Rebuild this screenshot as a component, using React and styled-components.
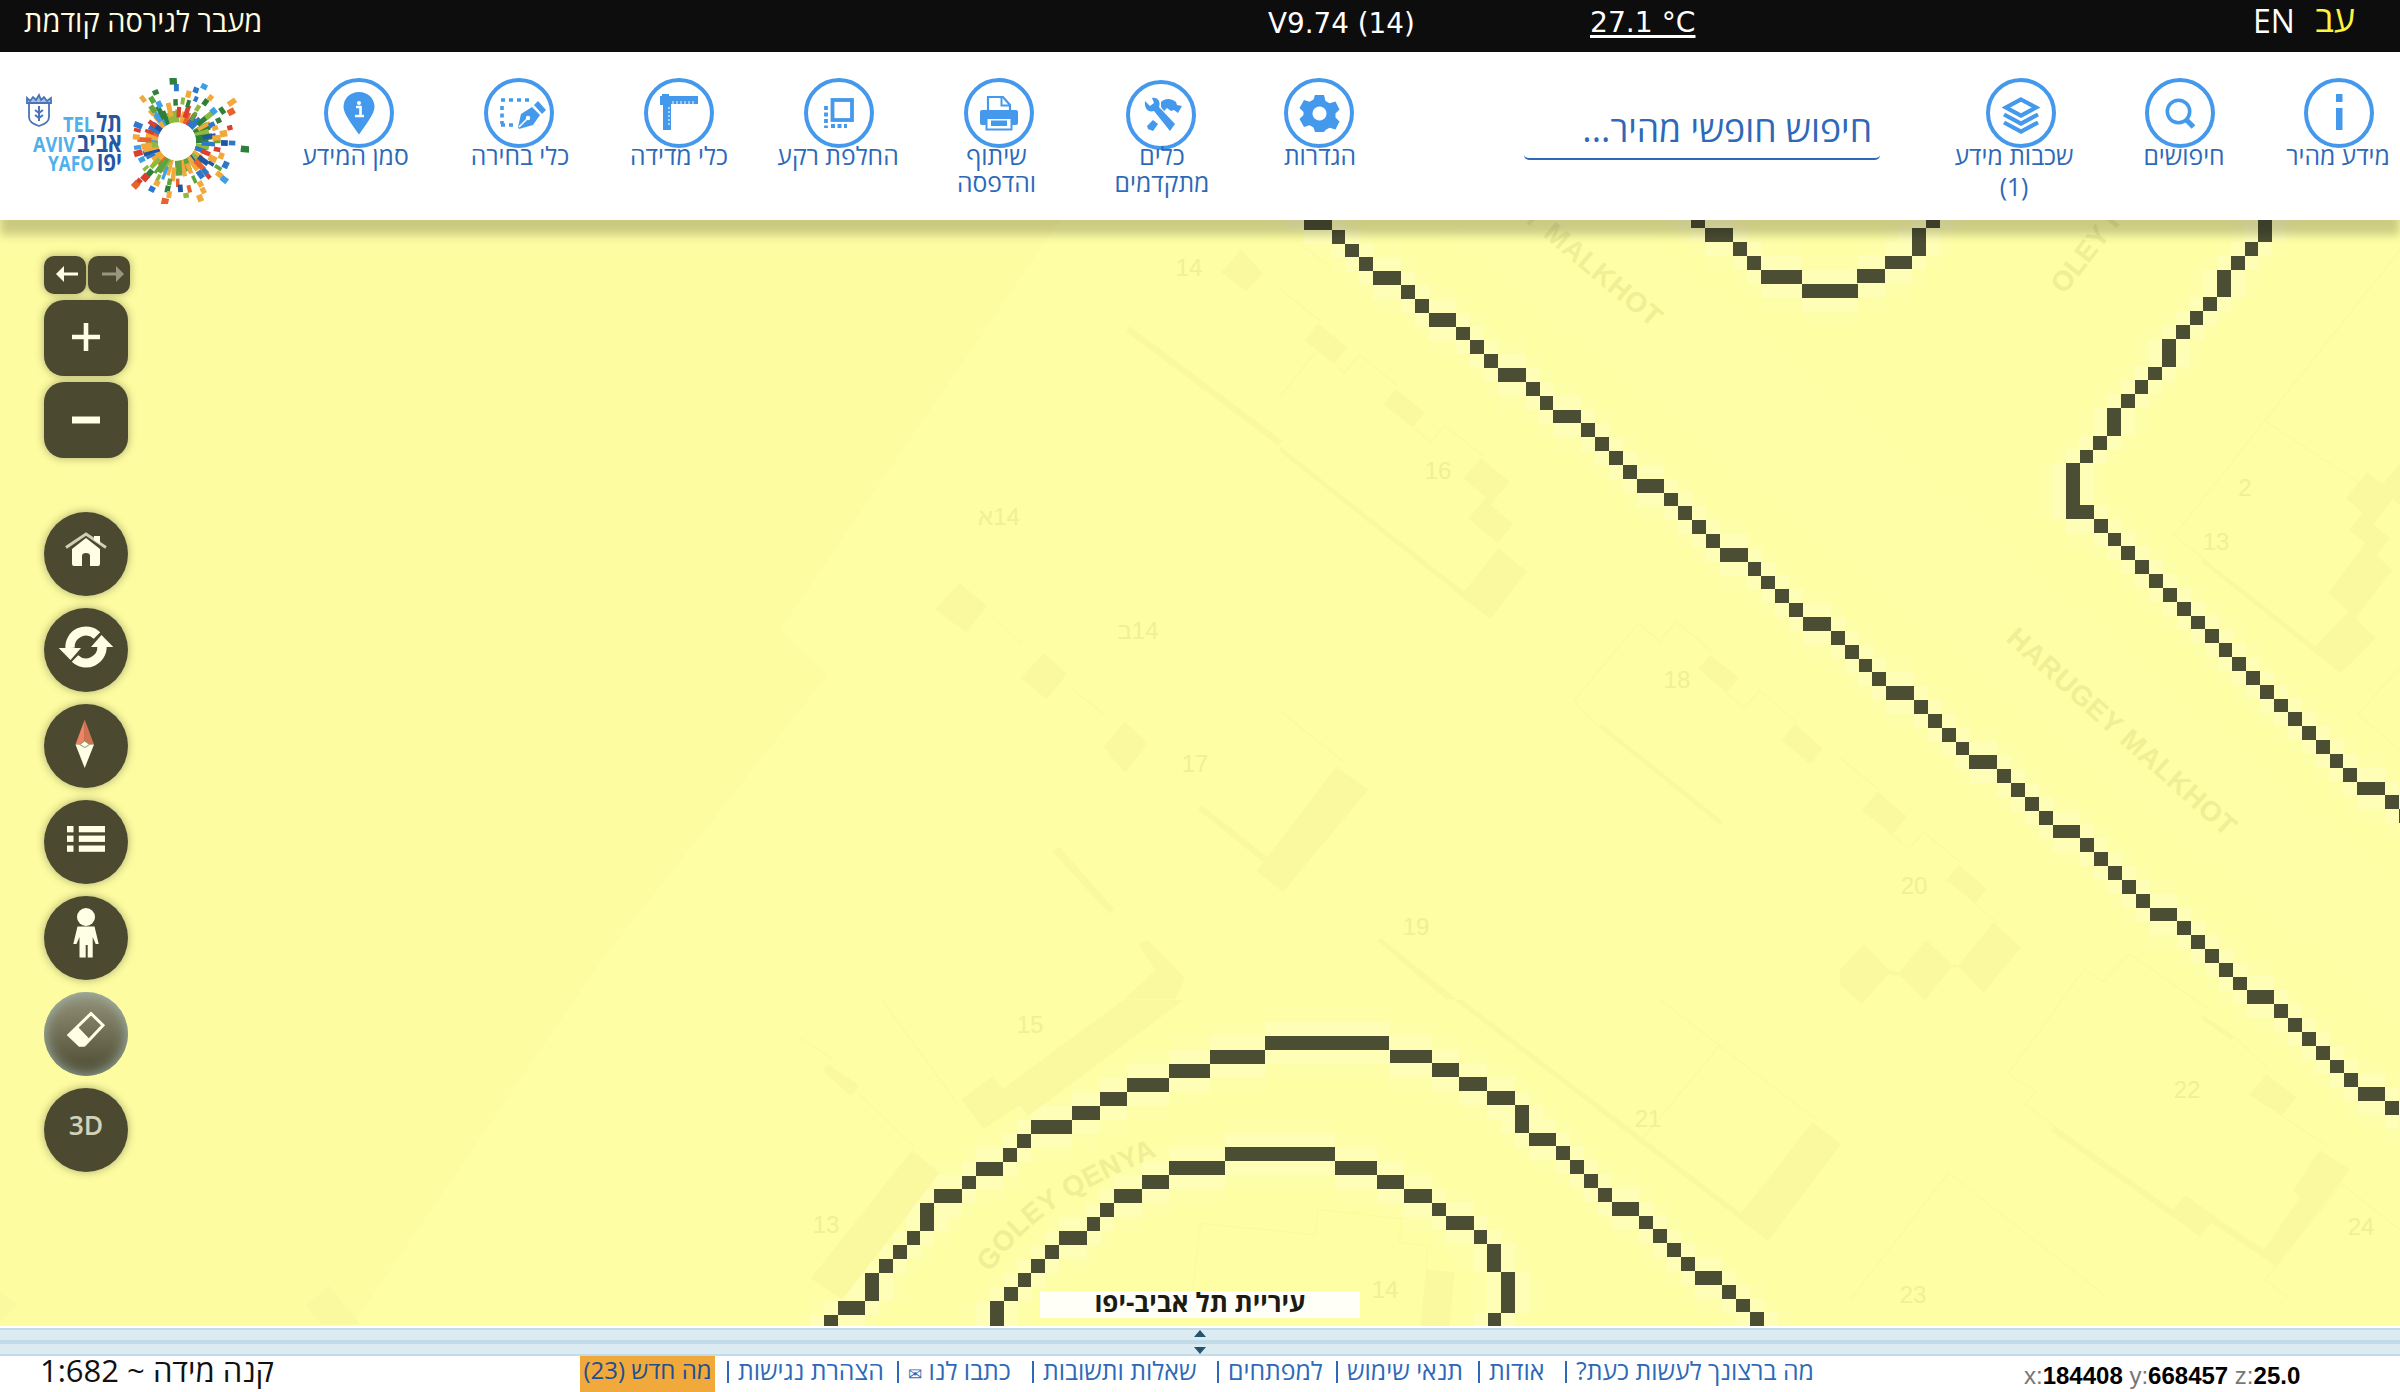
import React from 'react';
import styled, { createGlobalStyle } from 'styled-components';

const SANS = '"Open Sans", "Liberation Sans", sans-serif';
const WIDE = '"DejaVu Sans", "Liberation Sans", sans-serif';
const BLUE = '#2d69b8';
const SKY = '#4599ec';
const OLIVE = '#4b4a30';
const CREAM = '#ffffe6';

const Global = createGlobalStyle`
  html, body { margin: 0; padding: 0; background: #fff; overflow: hidden; }
  * { box-sizing: border-box; }
`;

const Page = styled.div`
  width: 2400px; height: 1392px; display: flex; flex-direction: column;
  font-family: ${SANS}; color: ${BLUE};
`;

/* ---------- top bar ---------- */
const TopBar = styled.div`
  height: 52px; flex: none; background: #0d0d0d; color: #fff;
  display: grid; grid-template-columns: 1268px 322px 663px 62px auto; align-items: start;
`;
const TopText = styled.div`
  white-space: nowrap; font-family: ${p => p.$font || SANS}; font-size: ${p => p.$size}px;
  line-height: ${p => p.$line}px; color: ${p => p.$color || '#fff'};
  padding-left: ${p => p.$pad || 0}px; letter-spacing: ${p => p.$track || 0}px;
  font-weight: ${p => p.$weight || 400};
`;
const Temperature = styled.span`text-decoration: underline; text-decoration-thickness: 3px; text-underline-offset: 3px;`;

/* ---------- header ---------- */
const Header = styled.header`
  height: 168px; flex: none; background: #fff; display: flex; align-items: flex-start;
  position: relative; z-index: 2;
  box-shadow: 0 15px 9px 0 rgba(0, 0, 0, 0.2);
`;
const LogoBox = styled.div`width: 279px; padding: 26px 0 0 24px;`;
const LogoSvg = styled.svg`display: block; width: 225px; height: 126px;`;
const NavGroup = styled.nav`display: flex;`;
const NavItem = styled.div`
  width: ${p => p.$w || 160}px; margin-left: ${p => p.$gap || 0}px; padding-top: 26px;
  display: flex; flex-direction: column; align-items: center;
`;
const NavSvg = styled.svg`width: 70px; height: 70px; display: block; margin-left: ${p => p.$x || 0}px; margin-top: ${p => p.$y || 0}px;`;
const NavLabel = styled.div`
  margin-top: ${p => -5 - (p.$up || 0)}px; margin-left: ${p => (p.$dx || 0) * 2}px;
  font-size: 24.7px; line-height: 26.5px; text-align: center; white-space: nowrap; direction: rtl;
`;
const LabelLine = styled.div`padding-top: ${p => p.$drop || 0}px;`;
const Search = styled.div`
  margin: 51px 60px 0 125px; width: 356px; height: 57px; padding: 1px 8px 0 0;
  border-bottom: 2px solid ${BLUE}; border-radius: 5px;
  direction: rtl; font-size: 35.6px; line-height: 48px; white-space: nowrap;
`;

/* ---------- map ---------- */
const MapArea = styled.main`height: 1106px; flex: none; position: relative; overflow: hidden; background: #fefea4;`;
const MapSvg = styled.svg`display: block; width: 2400px; height: 1106px;`;
const Tools = styled.div`position: absolute; left: 44px; top: 36px; display: flex; flex-direction: column; width: 86px;`;
const History = styled.div`display: flex; gap: 2px; margin-bottom: 6px;`;
const shade = 'box-shadow: 0 0 8px rgba(75, 74, 48, 0.45);';
const SmallButton = styled.button`
  width: 42px; height: 38px; border: 0; padding: 0; border-radius: 10px; background: ${OLIVE}; ${shade}
`;
const ZoomButton = styled.button`
  width: 84px; height: 76px; border: 0; padding: 0; border-radius: 20px; background: ${OLIVE}; margin-bottom: ${p => p.$after}px; ${shade}
`;
const RoundButton = styled.button`
  width: 84px; height: 84px; border: 0; padding: 0; border-radius: 50%; margin-bottom: 12px;
  background: ${p => (p.$active ? 'linear-gradient(#95937a, #4b4a30)' : OLIVE)};
  ${p => (p.$active ? 'box-shadow: inset 0 0 14px #a3bcb4;' : shade)}
`;
const ToolSvg = styled.svg`display: block;`;
const ToolText = styled.span`
  display: block; font: 600 26.5px/54px ${SANS}; color: #d3d2b8; padding-bottom: 10px;
`;
const Owner = styled.div`
  position: absolute; left: 1040px; top: 1071px; width: 320px; height: 27px;
  background: rgba(255, 255, 250, 0.97); color: #1c1c12; text-align: center; direction: rtl;
  font-size: 26px; line-height: 22px; font-weight: 700; white-space: nowrap;
`;

/* ---------- splitter and footer ---------- */
const Splitter = styled.div`
  height: 30px; flex: none; border-top: 2px solid #fff;
  display: flex; flex-direction: column; background: #c1dbe9; padding: 2px 0;
`;
const SplitRow = styled.div`
  height: 10px; margin-bottom: ${p => (p.$first ? 4 : 0)}px; background: #dcebf2;
  display: flex; justify-content: center; align-items: ${p => (p.$first ? 'flex-start' : 'flex-end')};
`;
const Footer = styled.footer`height: 36px; flex: none; display: flex; align-items: flex-start; background: #fff;`;
const ScaleBox = styled.div`width: 580px; padding-left: 40px; display: flex;`;
const Scale = styled.div`direction: rtl; color: #111; font-size: 31px; line-height: 28px; white-space: nowrap;`;
const News = styled.a`
  width: 135px; height: 36px; margin-right: 12px; background: #f2a93b; color: #1f4f8f; text-align: center;
  direction: rtl; font-size: 24px; line-height: 28px; white-space: nowrap;
`;
const Links = styled.div`display: flex; width: 1297px;`;
const Link = styled.a`
  width: ${p => p.$w}px; display: flex; gap: 9px; font-size: 24.8px; line-height: 28px; white-space: nowrap;
`;
const Bar = styled.i`width: 2px; height: 22px; margin-top: 5px; background: ${BLUE};`;
const LinkText = styled.span`direction: rtl;`;
const Mail = styled.span`font-size: 17px;`;
const Coords = styled.div`font: 24px/40px "Liberation Sans", sans-serif; color: #777; white-space: nowrap; b { color: #000; }`;

/* ---------- logo ---------- */
const PALETTE = ['#1f56a5', '#3f9fe6', '#e8622c', '#f0a93a', '#2f7f3a', '#8cba3f', '#d9402e', '#2c78cc', '#f0a93a', '#5fa53f'];
function burst() {
  const out = [];
  let seed = 11;
  const rnd = () => { seed = (seed * 16807) % 2147483647; return seed / 2147483647; };
  const rings = [[19, 13, 40, 5], [24, 11, 24, 4.500], [35, 7, 34, 4.800], [43, 6, 26, 5.500], [50, 6, 19, 6], [56, 6, 11, 6], [62, 7, 9, 5]];
  rings.forEach(([r, len, n, w], k) => {
    for (let i = 0; i < n; i++) {
      const a = (i / n) * 360 + rnd() * 7;
      const westGap = (k > 2 && a > 140 && a < 224) || (k === 6 && a > 50 && a < 310);
      const c = PALETTE[Math.floor(rnd() * PALETTE.length)];
      const l = len * (0.8 + rnd() * 0.5);
      const ww = w * (0.7 + rnd() * 0.6);
      if (!westGap && rnd() < 0.92) {
        out.push(<rect key={k + '-' + i} x={r + (k ? rnd() * 3 : 0)} y={-ww / 2} width={l} height={ww} fill={c} transform={`rotate(${a})`} />);
      }
    }
  });
  return out;
}
function Logo() {
  return (
    <LogoSvg viewBox="24 78 225 126">
      <g transform="translate(177 141.5)">{burst()}<circle r="19" fill="#fff" /></g>
      <g fill="none" stroke="#4a74b8" strokeWidth="1.8">
        <path d="M29 103h20v14q0 6-10 9q-10-3-10-9z" />
        <path d="M27 98v5h24v-5l-4 3-3-4-3 3-2-5-3 5-3-3-3 4z" fill="#a9bfe0" />
        <path d="M39 106v15M35 110l4 3 4-3M35 115l4 3 4-3" strokeWidth="2" />
      </g>
      <g fontFamily='"Open Sans", sans-serif' fontWeight="700" fontSize="22">
        <g fill="#4fb0ea">
          <text x="63" y="132" textLength="31" lengthAdjust="spacingAndGlyphs">TEL</text>
          <text x="33" y="151.5" textLength="42" lengthAdjust="spacingAndGlyphs">AVIV</text>
          <text x="48" y="171" textLength="46" lengthAdjust="spacingAndGlyphs">YAFO</text>
        </g>
        <g fill="#2657a3" fontSize="26">
          <text x="96" y="132" textLength="26" lengthAdjust="spacingAndGlyphs">תל</text>
          <text x="77" y="151.5" textLength="45" lengthAdjust="spacingAndGlyphs">אביב</text>
          <text x="97" y="171" textLength="25" lengthAdjust="spacingAndGlyphs">יפו</text>
        </g>
      </g>
    </LogoSvg>
  );
}

/* ---------- header icons, drawn in a 70-unit box ---------- */
const Ic = {
  pin: <>
    <path d="M35 14c-9 0-15.5 6.500-15.500 15 0 7 9 18 15.500 27.500C41.500 47 50.500 36 50.500 29 50.500 20.500 44 14 35 14z" fill={SKY} />
    <path d="M32 29h4.500v8.500M31 38h9" stroke="#fff" strokeWidth="2.6" fill="none" /><circle cx="35" cy="25" r="2" fill="#fff" />
  </>,
  select: <>
    <path d="M17 22h28" stroke={SKY} strokeWidth="3.600" strokeDasharray="4 4" />
    <path d="M18 28v18" stroke={SKY} strokeWidth="3.600" strokeDasharray="4 3.500" />
    <path d="M17 47h14" stroke={SKY} strokeWidth="3.600" strokeDasharray="4 4" />
    <path d="M34 49l3-13 11-7 8 8-7 10-14 4z" fill={SKY} /><path d="M50 27l4-4 8 9-4 4z" fill={SKY} />
    <path d="M35 49l8-8" stroke="#fff" strokeWidth="1.600" /><circle cx="44" cy="40" r="2.200" fill="#fff" />
  </>,
  ruler: <>
    <path d="M16 18h2v-2h7v2h29v8H27v26h-8V27h-3z" fill={SKY} />
    <path d="M29 26v-3M33 26v-3M37 26v-3M41 26v-3M45 26v-3M49 26v-3M26 30h-2M26 34h-2M26 38h-2M26 42h-2M26 46h-2" stroke="#cfe4fa" strokeWidth="1.300" />
  </>,
  swap: <>
    <rect x="28.500" y="22" width="19.500" height="20" fill="none" stroke={SKY} strokeWidth="3.800" />
    <path d="M22 28v22" stroke={SKY} strokeWidth="3.800" strokeDasharray="4 2.500" />
    <path d="M27 48h16" stroke={SKY} strokeWidth="3.800" strokeDasharray="4 2.500" />
  </>,
  print: <>
    <path d="M24 33V19h15l7 8v6" fill="none" stroke={SKY} strokeWidth="2.200" /><path d="M37.500 19v8.500H46" fill="none" stroke={SKY} strokeWidth="2" />
    <rect x="16" y="32" width="38" height="15" rx="2" fill={SKY} />
    <rect x="22.500" y="40" width="25" height="11.500" fill="#fff" stroke={SKY} strokeWidth="2" />
    <rect x="27" y="42.500" width="16" height="5.500" fill={SKY} />
  </>,
  tools: <>
    <path d="M19 21l5 5 4-3-2-5c6-1 9 4 7 9l16 17-5 7-16-20c-6 2-10-3-9-10z" fill={SKY} />
    <path d="M35 22c4-4 10-4 15 0l1 3 5 1-4 7-4-3-3 1-4-3-3 3-3-4z" fill={SKY} />
    <path d="M27 40l5 4-5 7-5-2-1-3z" fill={SKY} />
  </>,
  gear: <path fillRule="evenodd" fill={SKY} d="M31 17h9l1.500 6 4 2.200 6-1.700 4 8-4 4v4l4 4-4 8-6-1.700-4 2.200L40 54h-9l-1.500-4.500-4-2.200-5.500 1.700-4.500-8 4-4v-3l-4-4 4.500-8 5.500 1.700 4-2.200zM35.500 28.500a7 7 0 1 0 .01 0z" />,
  layers: <g fill="none" stroke={SKY} strokeWidth="4.200" strokeLinejoin="miter">
    <path d="M35 21.500L50 29.500 35 37.500 20 29.500z" /><path d="M18 36.500l17 9 17-9" /><path d="M18 44.500l17 9 17-9" />
  </g>,
  search: <g fill="none" stroke={SKY}><circle cx="33.500" cy="33.500" r="11.200" strokeWidth="3.600" /><path d="M41.500 42l7 7" strokeWidth="5.200" /></g>,
  info: <g fill={SKY}><rect x="32" y="16" width="6.500" height="8" /><rect x="32" y="30" width="6.500" height="22" /></g>,
};
function Nav({ icon, lines, w, gap, dx, x = 0, y = 0, drop }) {
  return (
    <NavItem $w={w} $gap={gap}>
      <NavSvg viewBox="0 0 70 70" $x={x} $y={y}>
        <circle cx="35" cy="35" r="33" fill="none" stroke={SKY} strokeWidth="4" />
        {Ic[icon]}
      </NavSvg>
      <NavLabel $dx={dx} $up={y}>
        {lines.map((l, i) => <LabelLine key={l} $drop={i ? drop : 0}>{l}</LabelLine>)}
      </NavLabel>
    </NavItem>
  );
}

/* ---------- boundary lines: stair-stepped runs on a coarse raster ----------
   A positive run is n cells wide and one high, a negative one is n cells high. */
function steps({ x, y, sx = 1, sy = 1, cx = 13.85, cy = 13.83, runs }) {
  const rects = [];
  runs.forEach(n => {
    const w = (n > 0 ? n : 1) * cx;
    const h = (n < 0 ? -n : 1) * cy;
    const x2 = x + w * sx;
    const y2 = y + h * sy;
    const l = Math.round(Math.min(x, x2));
    const t = Math.round(Math.min(y, y2));
    rects.push([l, t, Math.round(Math.max(x, x2)) - l, Math.round(Math.max(y, y2)) - t]);
    x = x2;
    y = y2;
  });
  return rects;
}
const ones = n => Array(n).fill(1);
const BOUNDARY = [
  steps({ x: 1303.9, y: 216, cx: 13.865, runs: [2, 1, 1, 1, 2, 1, 1, 2, 1, 1, 1, 2, 1, 1, 2, 1, 1, 1, 1, 2, 1, 1, 1, 1, 2, 1, 1, 1, 1, 2,
    1, 1, 1, 1, 2, 1, 1, 1, 1, 2, 1, 1, 1, 1, 2, ...ones(5), 2, ...ones(5), 2, ...ones(6), 2, 1] }),
  steps({ x: 2272, y: 214.5, sx: -1, cx: 13.74, runs: [-2, 1, 1, -2, 1, 1, 1, -2, 1, 1, 1, -2, 1, 1, -3] }),
  steps({ x: 2066, y: 505, cx: 13.87, runs: [2, ...ones(19), 2, 1, 1] }),
  steps({ x: 1691, y: 214, cx: 13.9, cy: 14, runs: [1, 2, 1, 1, 3, 4] }),
  steps({ x: 1857, y: 283, sy: -1, cx: 13.85, cy: 13.7, runs: [2, 2, -2, 1] }),
  steps({ x: 823.9, y: 1329, sy: -1, cx: 13.79, cy: 13.95, runs: [1, 2, -2, 1, 1, 1, -2, 2, 1, 2, 1, 1, 3, 2, 2, 3, 3, 4, 9] }),
  steps({ x: 1390, y: 1049.5, cx: 13.85, cy: 13.84, runs: [3, 2, 2, 2, -2, 2, 1, 1, 1, 1, 2, 1, 1, 1, 1, 2, 1, 1, 1] }),
  steps({ x: 990, y: 1329, sy: -1, cx: 13.8, cy: 13.97, runs: [-2, 1, 1, 1, 1, 2, 1, 1, 2, 2, 4, 8] }),
  steps({ x: 1335, y: 1161, cx: 13.85, cy: 13.84, runs: [3, 2, 2, 1, 2, 1, -2, -3] }),
  [[1488, 1313, 13, 14]],
].flat();
function Glow({ pad, fill }) {
  return (
    <g fill={fill} shapeRendering="crispEdges">
      {BOUNDARY.map(([x, y, w, h], i) => <React.Fragment key={i}>
        <rect x={x - pad} y={y} width={w + 2 * pad} height={h} />
        <rect x={x} y={y - pad} width={w} height={h + 2 * pad} />
      </React.Fragment>)}
    </g>
  );
}
function Boundary() {
  return (
    <g fill="#4b4e33" shapeRendering="crispEdges">
      {BOUNDARY.map(([x, y, w, h], i) => <rect key={i} x={x} y={y} width={w} height={h} />)}
    </g>
  );
}

/* ---------- faint base map: parcels, buildings, house numbers ---------- */
const SHEETS = [
  { t: 'translate(1280 200) scale(.35714)', polys: [
    '108,348 188,412 152,458 70,395', '325,530 405,595 372,636 289,573',
    '563,723 642,788 590,855 653,907 610,960 528,893 577,833 515,780',
    '612,975 692,1041 588,1173 0,705 0,690 515,1096', '1205,1275 1285,1337 1250,1380 1170,1312',
    '1442,1468 1520,1535 1485,1580 1405,1512', '900,1468 1240,1740 1232,1750 893,1476'],
    lines: ['0,250 112,338 70,395', '100,425 0,550', '152,458 180,485 222,433 330,520', '372,636 422,678 460,630 568,716',
      '1250,1380 1300,1422 1343,1373 1447,1462', '893,1476 823,1402 1003,1185 1063,1235 1110,1180 1210,1265', '0,1430 180,1574'] },
  { t: 'translate(1840 200) scale(.35714)', polys: [
    '1475,762 1520,795 1568,737 1568,857 1548,838 1494,908 1540,947 1503,995 1546,1037 1444,1172 1500,1226 1402,1326 1010,1012 1017,1003 1330,1250 1424,1152 1368,1102 1470,960 1426,923 1464,876 1417,835'],
    lines: ['1568,140 935,940 1017,1003', '1187,617 1452,790', '1568,1310 1450,1440 1568,1540'] },
  { t: 'translate(1840 740) scale(.35714)', polys: [
    '105,145 188,215 145,264 62,197', '332,350 412,417 378,458 298,392',
    '430,512 506,580 402,708 330,632', '241,560 316,632 238,728 163,655', '66,571 141,648 62,740 0,685 0,645', '136,642 165,652 160,660 136,656', '318,628 332,632 326,640 312,636',
    '1015,770 1104,830 1095,840 1013,782', '1195,936 1278,1000 1237,1052 1145,993',
    '600,1080 932,1315 968,1275 1043,1330 1188,1427 1288,1280 1268,1262 1343,1148 1428,1203 1222,1474 1040,1352 1008,1390 590,1094'],
    lines: ['145,264 192,305 235,258 338,343', '378,458 434,507', '600,1080 518,1020 550,985 470,935 685,641 737,677 810,598 1030,752',
      '1104,830 1203,925', '1237,1052 1355,1130', '28,1568 304,1212 735,1550', '1568,1372 1405,1243 1190,1510 1260,1568', '0,50 110,140'] },
  { t: 'translate(800 1000) scale(.35714 .33333)', polys: [
    '905,0 1075,0 640,348 615,315 513,388 452,298 540,228 568,267', '315,450 390,520 118,900 30,835', '80,195 165,255 150,280 65,205'],
    lines: ['230,0 438,307', '0,115 90,175', '165,280 318,440', '1100,870 1122,670 1442,704 1450,630 1568,640'] },
  { t: 'translate(1300 1000) scale(.35714 .33333)', polys: [
    '432,0 455,0 1235,640 1435,367 1515,433 1310,722', '352,808 433,816 418,978 338,978'],
    lines: ['1010,0 1175,137 1440,355', '1175,137 960,415', '50,630 285,655 278,727 358,738 352,808'] },
  { t: 'scale(1.5306)', polys: [
    '811,163 825,179 814,190 798,178', '627,381 645,396 631,413 611,398', '682,427 697,440 684,457 667,443',
    '735,471 750,486 735,505 721,488', '873,501 894,516 838,583 821,569', '734,653 755,634 744,617 750,614 774,639 768,653',
    '692,553 728,594 725,597 688,557', '902,613 952,653 945,653 900,615', '785,526 828,560 825,563 783,529', '738,213 838,288 835,291 736,217',
    '542,696 560,710 556,716 538,700', '0,845 12,852 0,864', '200,853 215,840 235,865 210,865'],
    lines: ['650,404 667,420', '700,450 722,467', '850,160 870,175'] },
];
const NUMBERS = [['14', 1189, 268], ['16', 1438, 471], ['18', 1677, 680], ['2', 2245, 488], ['13', 2216, 542], ['20', 1914, 886],
  ['22', 2187, 1090], ['24', 2361, 1227], ['23', 1913, 1295], ['15', 1030, 1025], ['13', 826, 1225], ['21', 1648, 1119],
  ['14', 1385, 1290], ['17', 1195, 764], ['19', 1416, 927], ['14א', 999, 517], ['14ב', 1138, 631]];

function BaseMap() {
  return (
    <MapSvg viewBox="0 220 2400 1106">
      <path d="M0 220H1060L780 630 828 675 604 957 352 1326H0z" fill="#fdfca1" />
      <path d="M1480 220h160L2400 880v150L1440 235z" fill="#fefea9" opacity=".6" />
      <Glow pad={28} fill="#fefea9" />
      <Glow pad={14} fill="#fefeb6" />
      {SHEETS.map(s => (
        <g key={s.t} transform={s.t}>
          {s.polys.map(p => <polygon key={p} points={p} fill="#faf99f" />)}
          {s.lines.map(p => <polyline key={p} points={p} fill="none" stroke="#fafa9f" strokeWidth="1.200" vectorEffect="non-scaling-stroke" />)}
        </g>
      ))}
      <g fill="#f0f096" fontFamily='"Liberation Sans", sans-serif' fontSize="24" textAnchor="middle">
        {NUMBERS.map(([t, x, y]) => <text key={t + x} x={x} y={y + 7.500} direction={t.length > 2 ? 'rtl' : 'ltr'}>{t}</text>)}
      </g>
      <g fill="#f0ef96" fontFamily='"Liberation Sans", sans-serif' fontSize="28" fontWeight="700">
        <text transform="translate(2005 640) rotate(41.800)" textLength="296">HARUGEY MALKHOT</text>
        <text transform="translate(1652 328) rotate(40)" textAnchor="end" textLength="296">HARUGEY MALKHOT</text>
        <text transform="translate(2064 295) rotate(-52)">OLEY HAGARDOM</text>
        <path id="qenya" d="M990 1273C1035 1211 1070 1192 1200 1138" fill="none" />
        <text textLength="208"><textPath href="#qenya">GOLEY QENYA</textPath></text>
      </g>
      <Boundary />
    </MapSvg>
  );
}

/* ---------- map tool icons, drawn in an 84-unit box ---------- */
const Tool = {
  home: <g fill={CREAM}>
    <path d="M22 35.500L42 22l20 13.500" fill="none" stroke="#cfceb6" strokeWidth="3" />
    <path d="M50 24h6v8l-6-4z" /><path d="M42 26L28 37v15q0 2 2 2h8V44q0-3 4-3t4 3v10h8q2 0 2-2V37z" />
  </g>,
  refresh: <g fill="none" stroke={CREAM} strokeWidth="9.300">
    <path d="M26 40A16 16 0 0 1 53 27.500" /><path d="M58 38A16 16 0 0 1 31 50.500" />
    <path d="M14.700 40H37L26.500 52z" fill={CREAM} stroke="none" /><path d="M69.300 39H47L57.500 27z" fill={CREAM} stroke="none" />
  </g>,
  compass: <g>
    <path d="M40.700 15.500L31.500 40.500H40.700z" fill="#ef8462" /><path d="M40.700 15.500L50 40.500H40.700z" fill="#cf7450" />
    <path d="M31.500 40.500h18.500L40.700 64z" fill={CREAM} /><path d="M40.700 37l5 3.500-5 3-5-3z" fill={CREAM} stroke="#8f8d72" strokeWidth="1" />
  </g>,
  list: <g fill={CREAM}>{[26, 35.600, 45.500].map(y => <React.Fragment key={y}><rect x="23" y={y} width="6.500" height="6.300" /><rect x="34.800" y={y} width="26.200" height="6.300" /></React.Fragment>)}</g>,
  person: <g fill={CREAM}><circle cx="42" cy="21" r="9" /><path d="M33.500 30.500h17L54.700 48h-3L48.700 41v20.500h-5V49h-2v12.500h-6.200V41L32.500 48h-3.200z" /></g>,
  eraser: <g><path d="M47 21.500L59 33.200 40.500 53h-5L25 43z" fill="none" stroke={CREAM} strokeWidth="3" /><path d="M34 35L45 46.500 40 54.500h-5L23 43z" fill={CREAM} /></g>,
};
const ArrowIcon = ({ flip, color }) => (
  <ToolSvg width="42" height="38" viewBox="0 0 42 38">
    <path d="M12 18l8-8v6.500h14v3H20V26z" fill={color} transform={flip ? 'translate(48 0) scale(-1 1)' : undefined} />
  </ToolSvg>
);

const LINKS = [
  ['הצהרת נגישות', 170], ['כתבו לנו', 135, '✉'], ['שאלות ותשובות', 185], ['למפתחים', 119],
  ['תנאי שימוש', 142], ['אודות', 87], ['מה ברצונך לעשות כעת?', 262],
];

export default function App() {
  return (
    <Page>
      <Global />
      <TopBar>
        <TopText $size={29} $line={42} $pad={24} $color="#fffde0" dir="ltr">מעבר לגירסה קודמת</TopText>
        <TopText $size={27.800} $line={47} $font={WIDE}>V9.74 (14)</TopText>
        <TopText $size={28.200} $line={46} $font={WIDE}><Temperature>27.1 °C</Temperature></TopText>
        <TopText $size={32} $line={42}>EN</TopText>
        <TopText $size={36} $line={37} $color="#fbf540">עב</TopText>
      </TopBar>

      <Header>
        <LogoBox><Logo /></LogoBox>
        <NavGroup>
          <Nav icon="pin" lines={['סמן המידע']} dx={-3.500} />
          <Nav icon="select" lines={['כלי בחירה']} dx={1} />
          <Nav icon="ruler" lines={['כלי מדידה']} />
          <Nav icon="swap" lines={['החלפת רקע']} dx={-1} />
          <Nav icon="print" lines={['שיתוף', 'והדפסה']} dx={-2.500} />
          <Nav icon="tools" lines={['כלים', 'מתקדמים']} dx={3} x={4} y={2} />
          <Nav icon="gear" lines={['הגדרות']} dx={1} />
        </NavGroup>
        <Search>חיפוש חופשי מהיר...</Search>
        <NavGroup>
          <Nav icon="layers" lines={['שכבות מידע', '(1)']} dx={-6} x={2} drop={4} />
          <Nav icon="search" lines={['חיפושים']} dx={4} x={-1} />
          <Nav icon="info" lines={['מידע מהיר']} w={122} gap={18} dx={-1} />
        </NavGroup>
      </Header>

      <MapArea>
        <BaseMap />
        <Tools>
          <History>
            <SmallButton><ArrowIcon color={CREAM} /></SmallButton>
            <SmallButton><ArrowIcon flip color="#98967d" /></SmallButton>
          </History>
          <ZoomButton $after={6}><ToolSvg width="84" height="76"><path d="M28 37h28M42 23v28" stroke={CREAM} strokeWidth="4.600" /></ToolSvg></ZoomButton>
          <ZoomButton $after={54}><ToolSvg width="84" height="76"><path d="M28 38h28" stroke={CREAM} strokeWidth="7" /></ToolSvg></ZoomButton>
          {['home', 'refresh', 'compass', 'list', 'person', 'eraser'].map(k => (
            <RoundButton key={k} $active={k === 'eraser'}><ToolSvg width="84" height="84">{Tool[k]}</ToolSvg></RoundButton>
          ))}
          <RoundButton><ToolText>3D</ToolText></RoundButton>
        </Tools>
        <Owner>עיריית תל אביב-יפו</Owner>
      </MapArea>

      <Splitter>
        <SplitRow $first><svg width="12" height="7"><path d="M0 7L6 0l6 7z" fill="#24546e" /></svg></SplitRow>
        <SplitRow><svg width="12" height="7"><path d="M0 0h12L6 7z" fill="#24546e" /></svg></SplitRow>
      </Splitter>

      <Footer>
        <ScaleBox><Scale>קנה מידה ~ 1:682</Scale></ScaleBox>
        <News>מה חדש (23)</News>
        <Links>
          {LINKS.map(([t, w, mark]) => (
            <Link key={t} $w={w}><Bar /><LinkText>{t}{mark && <> <Mail>{mark}</Mail></>}</LinkText></Link>
          ))}
        </Links>
        <Coords>x:<b>184408</b> y:<b>668457</b> z:<b>25.0</b></Coords>
      </Footer>
    </Page>
  );
}
